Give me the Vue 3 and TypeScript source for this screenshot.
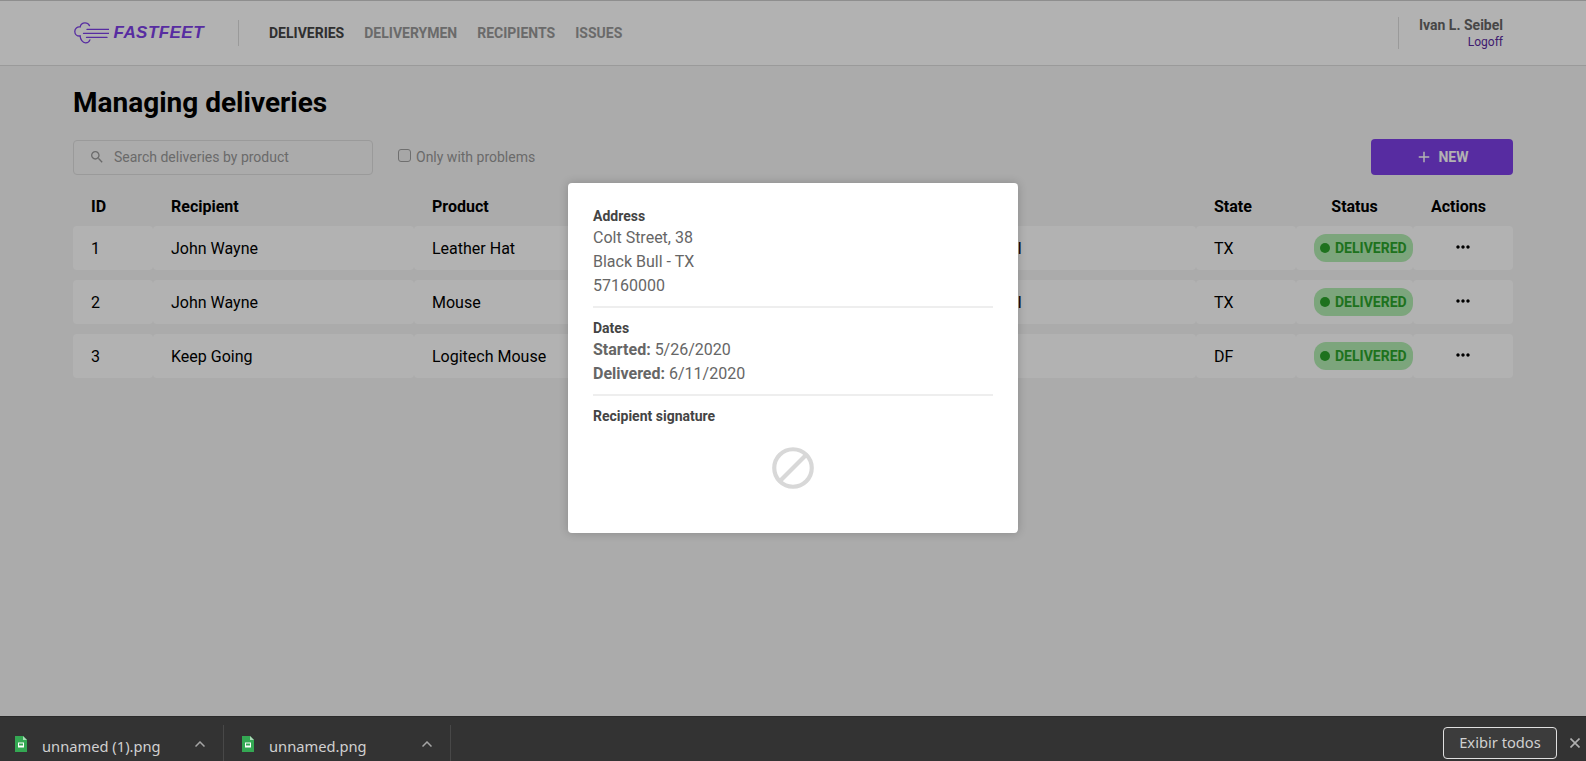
<template>
  <div class="page">
    <div class="main">
      <header class="topbar">
        <div class="logo">
          <svg class="logo-icon" viewBox="0 0 35 22" fill="none" stroke="#7d40e7" stroke-width="1.3" stroke-linecap="round">
            <path d="M15.500 3.600C14.600 1.800 12.800.8 11 .8 8.600.8 6.600 2.500 6.200 4.900 3.200 4.400.8 6.600.8 9.400c0 2.600 2.100 4.600 4.700 4.600.2 0 .4 0 .6-.1.2 3.400 2.500 6.900 5.400 7 2.100.1 3.700-1 4.400-3" />
            <path d="M13 7.400H35M9.500 11.400H35M12.500 15.400H33" />
          </svg>
          <span class="logo-text">FASTFEET</span>
        </div>
        <nav class="nav">
          <a v-for="item in navItems" :key="item" class="nav-link" :class="{ active: item === 'Deliveries' }">{{ item }}</a>
        </nav>
        <div class="user">
          <strong>Ivan L. Seibel</strong>
          <a>Logoff</a>
        </div>
      </header>

      <section class="content">
        <h1>Managing deliveries</h1>
        <div class="toolbar">
          <div class="search">
            <svg viewBox="0 0 24 24" fill="#999"><path d="M15.500 14h-.79l-.28-.27C15.410 12.590 16 11.110 16 9.500 16 5.910 13.090 3 9.500 3S3 5.910 3 9.500 5.910 16 9.500 16c1.610 0 3.090-.59 4.230-1.570l.27.28v.79l5 4.990L20.490 19l-4.990-5zm-6 0C7.010 14 5 11.990 5 9.500S7.010 5 9.500 5 14 7.010 14 9.500 11.990 14 9.500 14z" /></svg>
            <span>Search deliveries by product</span>
          </div>
          <label class="problems"><input type="checkbox" />Only with problems</label>
          <button class="new-btn">
            <svg viewBox="0 0 24 24" fill="#fff"><path d="M19 13h-6v6h-2v-6H5v-2h6V5h2v6h6v2z" /></svg>
            NEW
          </button>
        </div>

        <table class="grid">
          <colgroup>
            <col v-for="w in colWidths" :key="w.name" :style="{ width: w.size + 'px' }" />
          </colgroup>
          <thead>
            <tr>
              <th>ID</th>
              <th>Recipient</th>
              <th>Product</th>
              <th>Deliveryman</th>
              <th>City</th>
              <th>State</th>
              <th class="center">Status</th>
              <th>Actions</th>
            </tr>
          </thead>
          <tbody>
            <tr v-for="row in deliveries" :key="row.id">
              <td>{{ row.id }}</td>
              <td>{{ row.recipient }}</td>
              <td>{{ row.product }}</td>
              <td></td>
              <td>{{ row.city }}</td>
              <td>{{ row.state }}</td>
              <td class="status-cell">
                <span class="badge"><i></i>DELIVERED</span>
              </td>
              <td class="actions-cell">
                <svg viewBox="0 0 24 24" fill="#000"><path d="M6 10c-1.100 0-2 .9-2 2s.9 2 2 2 2-.9 2-2-.9-2-2-2zm12 0c-1.100 0-2 .9-2 2s.9 2 2 2 2-.9 2-2-.9-2-2-2zm-6 0c-1.100 0-2 .9-2 2s.9 2 2 2 2-.9 2-2-.9-2-2-2z" /></svg>
              </td>
            </tr>
          </tbody>
        </table>
      </section>

      <div class="overlay">
        <div class="modal">
          <div class="block">
            <h4>Address</h4>
            <p>Colt Street, 38</p>
            <p>Black Bull - TX</p>
            <p>57160000</p>
          </div>
          <div class="block">
            <h4>Dates</h4>
            <p><b>Started:</b> 5/26/2020</p>
            <p><b>Delivered:</b> 6/11/2020</p>
          </div>
          <div class="block">
            <h4>Recipient signature</h4>
            <div class="signature">
              <svg viewBox="0 0 24 24" fill="none" stroke="#d8d8d8" stroke-width="2">
                <circle cx="12" cy="12" r="9" />
                <path d="M5.640 18.360L18.360 5.640" />
              </svg>
            </div>
          </div>
        </div>
      </div>
    </div>

    <footer class="shelf">
      <div v-for="file in downloads" :key="file" class="download">
        <svg class="file-icon" viewBox="0 0 12 16">
          <path d="M0 0h8l4 4v12H0z" fill="#34a853" />
          <path d="M8 0l4 4H8z" fill="#a8dab5" />
          <rect x="3" y="6.500" width="6" height="5" fill="#fff" />
          <rect x="4" y="7.500" width="4" height="2" fill="#34a853" />
        </svg>
        <span class="file-name">{{ file }}</span>
        <svg class="chevron" viewBox="0 0 10 6" fill="none" stroke="#a5a5a5" stroke-width="1.500"><path d="M.5 5.500L5 1l4.500 4.500" /></svg>
      </div>
      <button class="show-all">Exibir todos</button>
      <svg class="close" viewBox="0 0 10 10" fill="none" stroke="#b0b0b0" stroke-width="1.600"><path d="M.5.5l9 9M9.500.5l-9 9" /></svg>
    </footer>
  </div>
</template>

<script setup lang="ts">
interface Delivery {
  id: number;
  recipient: string;
  product: string;
  city: string;
  state: string;
}

const navItems = ['Deliveries', 'Deliverymen', 'Recipients', 'Issues'];
const downloads = ['unnamed (1).png', 'unnamed.png'];

const colWidths = [
  { name: 'id', size: 80 },
  { name: 'recipient', size: 261 },
  { name: 'product', size: 259 },
  { name: 'deliveryman', size: 261 },
  { name: 'city', size: 262 },
  { name: 'state', size: 100 },
  { name: 'status', size: 117 },
  { name: 'actions', size: 100 },
];

const deliveries: Delivery[] = [
  { id: 1, recipient: 'John Wayne', product: 'Leather Hat', city: 'Black Bull', state: 'TX' },
  { id: 2, recipient: 'John Wayne', product: 'Mouse', city: 'Black Bull', state: 'TX' },
  { id: 3, recipient: 'Keep Going', product: 'Logitech Mouse', city: 'Brasília', state: 'DF' },
];
</script>

<style>
html,
body {
  margin: 0;
  height: 100%;
  overflow: hidden;
}
</style>

<style scoped>
.page {
  display: flex;
  flex-direction: column;
  height: 100vh;
  font-family: Roboto, "Liberation Sans", sans-serif;
  background: #f5f5f5;
}

.main {
  position: relative;
  flex: 1;
  min-height: 0;
  overflow: hidden;
}

.topbar {
  display: flex;
  align-items: center;
  box-sizing: border-box;
  height: 66px;
  padding: 0 73px;
  background: #fff;
  border-bottom: 1px solid #ddd;
  border-top: 1px solid #ccc;
}

.logo {
  display: flex;
  align-items: center;
  gap: 4.500px;
  width: 165px;
  height: 26px;
  border-right: 1px solid #ddd;
}

.logo-icon {
  width: 35px;
  height: 22px;
  margin-left: 1px;
}

.logo-text {
  font-family: "Liberation Sans", Roboto, sans-serif;
  font-size: 17px;
  font-weight: 700;
  font-style: italic;
  letter-spacing: 0.45px;
  color: #7d40e7;
}

.nav {
  display: flex;
  gap: 20px;
  margin-left: 30px;
}

.nav-link {
  font-size: 14px;
  font-weight: 700;
  text-transform: uppercase;
  color: #999;
}

.nav-link.active {
  color: #444;
}

.user {
  display: flex;
  flex-direction: column;
  align-items: flex-end;
  justify-content: center;
  gap: 2px;
  box-sizing: border-box;
  height: 32px;
  margin-left: auto;
  margin-right: 10px;
  padding-left: 20px;
  border-left: 1px solid #ddd;
  width: 105px;
  white-space: nowrap;
}

.user strong {
  font-size: 14px;
  font-weight: 700;
  color: #666;
}

.user a {
  font-size: 12px;
  color: #5a2aa0;
}

.content {
  padding: 0 73px;
}

h1 {
  margin: 20px 0 0;
  font-size: 28px;
  line-height: 33px;
  font-weight: 700;
  color: #000;
}

.toolbar {
  display: flex;
  align-items: center;
  margin-top: 20px;
}

.search {
  display: flex;
  align-items: center;
  gap: 9px;
  box-sizing: border-box;
  width: 300px;
  height: 35px;
  padding-left: 15px;
  background: #f5f5f5;
  border: 1px solid #ddd;
  border-radius: 4px;
  font-size: 14px;
  color: #999;
}

.search svg {
  width: 16px;
  height: 16px;
}

.problems {
  display: flex;
  align-items: center;
  margin-left: 25px;
  font-size: 14px;
  color: #999;
}

.problems input {
  appearance: none;
  box-sizing: border-box;
  width: 13px;
  height: 13px;
  margin: 0 5px 3px 0;
  background: #f0f0f0;
  border: 1px solid #a0a0a0;
  border-radius: 3px;
}

.new-btn {
  display: flex;
  align-items: center;
  justify-content: center;
  gap: 5px;
  width: 142px;
  height: 36px;
  margin-left: auto;
  padding: 0;
  border: none;
  border-radius: 4px;
  background: #7d40e7;
  color: #fff;
  font-family: inherit;
  font-size: 14px;
  font-weight: 700;
}

.new-btn svg {
  width: 18px;
  height: 18px;
}

.grid {
  width: 1440px;
  margin-top: 7px;
  table-layout: fixed;
  border-collapse: separate;
  border-spacing: 0 10px;
  font-size: 16px;
  color: #000;
}

th {
  padding: 5px 18px 0;
  font-weight: 700;
  text-align: left;
  line-height: 19px;
  white-space: nowrap;
}

th.center {
  text-align: center;
}

td {
  height: 44px;
  padding: 0 18px;
  background: #fff;
  border-radius: 4px;
  white-space: nowrap;
}

td.status-cell {
  padding-right: 0;
}

.badge {
  display: inline-flex;
  align-items: center;
  gap: 5px;
  height: 28px;
  padding: 0 6px;
  border-radius: 12px;
  background: rgb(178, 236, 178);
  color: #2ca42b;
  font-size: 14px;
  font-weight: 700;
  vertical-align: middle;
}

.badge i {
  width: 10px;
  height: 10px;
  border-radius: 50%;
  background: #2ca42b;
}

.actions-cell svg {
  display: block;
  width: 20px;
  height: 20px;
  margin: -2px auto 0;
}

.overlay {
  position: absolute;
  inset: 0;
  display: flex;
  align-items: center;
  justify-content: center;
  background: rgba(0, 0, 0, 0.3);
}

.modal {
  box-sizing: border-box;
  width: 450px;
  height: 350px;
  padding: 25px;
  background: #fff;
  border-radius: 4px;
  box-shadow: 0 0 10px rgba(0, 0, 0, 0.2);
  color: #666;
}

.block + .block {
  margin-top: 8px;
  padding-top: 12px;
  border-top: 2px solid #eee;
}

h4 {
  margin: 0 0 2px;
  font-size: 14px;
  line-height: 16px;
  font-weight: 700;
  color: #444;
}

p {
  margin: 0;
  font-size: 16px;
  line-height: 24px;
}

.signature {
  display: flex;
  justify-content: center;
  margin-top: 19px;
}

.signature svg {
  width: 50px;
  height: 50px;
}

.shelf {
  display: flex;
  align-items: center;
  flex: none;
  box-sizing: border-box;
  height: 45px;
  padding-top: 9px;
  padding-bottom: 2px;
  background: #333;
  border-top: 1px solid #2a2a2a;
  font-family: "Noto Sans", "Open Sans", sans-serif;
}

.download {
  display: flex;
  align-items: center;
  box-sizing: border-box;
  flex: none;
  width: 227px;
  height: 38px;
  margin-bottom: -2px;
  padding-left: 15px;
  border-right: 1px solid #484848;
}

.download:first-child {
  width: 224px;
}

.download + .download {
  padding-left: 18px;
}

.file-icon {
  width: 12px;
  height: 16px;
}

.file-name {
  margin: 4px 0 0 15px;
  font-size: 14.700px;
  color: #d0d0d0;
}

.chevron {
  width: 10px;
  height: 6px;
  margin-left: auto;
  margin-right: 18px;
}

.show-all {
  box-sizing: border-box;
  width: 114px;
  height: 32px;
  margin-left: auto;
  padding: 0 0 2px;
  border: 1px solid #e0e0e0;
  border-radius: 4px;
  background: #3c3c3c;
  color: #d0d0d0;
  font-family: inherit;
  font-size: 14.700px;
}

.close {
  width: 10px;
  height: 10px;
  margin: 0 6px 0 13px;
}
</style>
